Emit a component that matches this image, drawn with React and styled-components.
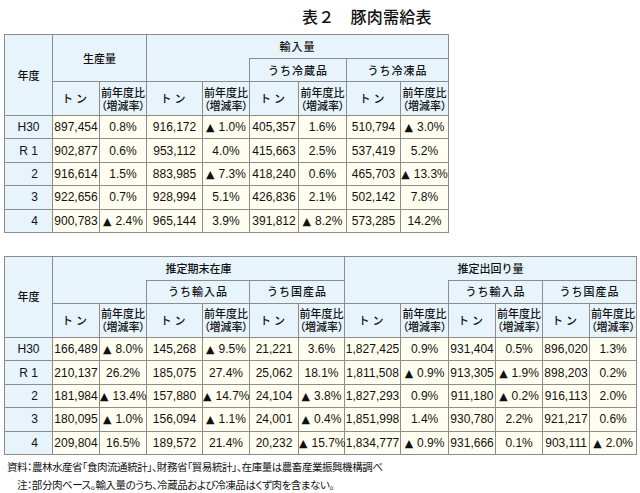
import React from "react";
import styled, { createGlobalStyle } from "styled-components";

const GlobalStyle = createGlobalStyle`
  html, body { margin: 0; padding: 0; background: #ffffff; }
  body { font-family: "Liberation Sans", "Noto Sans CJK JP", sans-serif; color: #111; }
`;

const HEAD_BG = "#e7f4fc";
const YEAR_BG = "#e7f4fc";
const CELL_BG = "#fffef0";
const LINE = "#8c8c8c";

const Page = styled.div`
  width: 640px;
  padding-left: 4px;
  box-sizing: border-box;
`;

const Title = styled.h1`
  margin: 0;
  height: 34px;
  padding-left: 298px;
  font-family: "Noto Sans CJK JP", sans-serif;
  font-size: 16px;
  font-weight: 500;
  line-height: 33px;
  letter-spacing: 0.2px;
  color: #111;
`;

const Table = styled.table`
  table-layout: fixed;
  border-collapse: collapse;
  width: ${(p) => p.$width}px;
  margin-bottom: ${(p) => p.$gap}px;
  border: 1px solid #808080;
`;

const HeadRow = styled.tr`
  height: ${(p) => p.$h}px;
`;

const DataRow = styled.tr`
  height: 23.4px;
`;

const HeadCell = styled.th`
  background: ${HEAD_BG};
  border: 1px solid ${LINE};
  ${(p) => (p.$open ? "border-top-style: hidden;" : "")}
  padding: 0;
  text-align: center;
  vertical-align: middle;
  font-family: "Noto Sans CJK JP", sans-serif;
  font-size: 11px;
  font-weight: 500;
  line-height: 13px;
  letter-spacing: ${(p) => p.$spread || 0}px;
  white-space: nowrap;
  color: #111;
`;

const Paren = styled.span`
  font-feature-settings: "palt";
`;

const YearCell = styled.th`
  background: ${YEAR_BG};
  border: 1px solid ${LINE};
  padding: 0 0 0 ${(p) => (p.$single ? 12 : 0)}px;
  text-align: center;
  font-family: "Liberation Sans", "Noto Sans CJK JP", sans-serif;
  font-size: 12px;
  font-weight: 400;
  color: #111;
`;

const NumCell = styled.td`
  background: ${CELL_BG};
  border: 1px solid ${LINE};
  padding: 0;
  text-align: center;
  white-space: nowrap;
  font-family: "Liberation Sans", "DejaVu Sans", sans-serif;
  font-size: 12px;
  color: #111;
`;

const Tri = styled.span`
  font-family: "DejaVu Sans", sans-serif;
  font-size: 11px;
  margin-right: 4px;
`;

const Notes = styled.div`
  padding-top: 3px;
  padding-left: 3px;
  font-family: "Noto Sans CJK JP", sans-serif;
  font-size: 10.5px;
  line-height: 18px;
  letter-spacing: -0.45px;
  font-feature-settings: "palt";
  color: #111;
`;

const NoteLine = styled.div`
  padding-left: ${(p) => p.$indent || 0}px;
  white-space: nowrap;
`;

const Ratio = () => (
  <>
    前年度比
    <br />
    <Paren>（増減率）</Paren>
  </>
);

const Value = ({ v }) =>
  v.startsWith("▲") ? (
    <>
      <Tri>▲</Tri>
      {v.slice(2)}
    </>
  ) : (
    v
  );

const years = ["H30", "R 1", "2", "3", "4"];

const supply = [
  ["897,454", "0.8%", "916,172", "▲ 1.0%", "405,357", "1.6%", "510,794", "▲ 3.0%"],
  ["902,877", "0.6%", "953,112", "4.0%", "415,663", "2.5%", "537,419", "5.2%"],
  ["916,614", "1.5%", "883,985", "▲ 7.3%", "418,240", "0.6%", "465,703", "▲ 13.3%"],
  ["922,656", "0.7%", "928,994", "5.1%", "426,836", "2.1%", "502,142", "7.8%"],
  ["900,783", "▲ 2.4%", "965,144", "3.9%", "391,812", "▲ 8.2%", "573,285", "14.2%"],
];

const stock = [
  ["166,489", "▲ 8.0%", "145,268", "▲ 9.5%", "21,221", "3.6%", "1,827,425", "0.9%", "931,404", "0.5%", "896,020", "1.3%"],
  ["210,137", "26.2%", "185,075", "27.4%", "25,062", "18.1%", "1,811,508", "▲ 0.9%", "913,305", "▲ 1.9%", "898,203", "0.2%"],
  ["181,984", "▲ 13.4%", "157,880", "▲ 14.7%", "24,104", "▲ 3.8%", "1,827,293", "0.9%", "911,180", "▲ 0.2%", "916,113", "2.0%"],
  ["180,095", "▲ 1.0%", "156,094", "▲ 1.1%", "24,001", "▲ 0.4%", "1,851,998", "1.4%", "930,780", "2.2%", "921,217", "0.6%"],
  ["209,804", "16.5%", "189,572", "21.4%", "20,232", "▲ 15.7%", "1,834,777", "▲ 0.9%", "931,666", "0.1%", "903,111", "▲ 2.0%"],
];

const topCols = [48, 47, 47, 56, 47, 49, 48, 54, 48];
const bottomCols = [48, 47, 47, 56, 47, 49, 46, 56, 48, 47, 47, 47, 47];

const Cols = ({ widths }) => (
  <colgroup>
    {widths.map((w, i) => (
      <col key={i} style={{ width: w }} />
    ))}
  </colgroup>
);

const Body = ({ rows }) => (
  <tbody>
    {rows.map((r, i) => (
      <DataRow key={i}>
        <YearCell scope="row" $single={years[i].length === 1}>
          {years[i]}
        </YearCell>
        {r.map((v, j) => (
          <NumCell key={j}>
            <Value v={v} />
          </NumCell>
        ))}
      </DataRow>
    ))}
  </tbody>
);

const UnitRow = ({ pairs }) => (
  <HeadRow $h={34}>
    {Array.from({ length: pairs }).flatMap((_, i) => [
      <HeadCell key={`t${i}`} $spread={3}>
        トン
      </HeadCell>,
      <HeadCell key={`r${i}`}>
        <Ratio />
      </HeadCell>,
    ])}
  </HeadRow>
);

export default function App() {
  return (
    <Page>
      <GlobalStyle />
      <Title>表２　豚肉需給表</Title>

      <Table $width={445} $gap={23}>
        <Cols widths={topCols} />
        <thead>
          <HeadRow $h={24}>
            <HeadCell rowSpan={3}>年度</HeadCell>
            <HeadCell colSpan={2} rowSpan={2}>
              生産量
            </HeadCell>
            <HeadCell colSpan={6} $spread={1}>
              輸入量
            </HeadCell>
          </HeadRow>
          <HeadRow $h={23}>
            <HeadCell colSpan={2} $open />
            <HeadCell colSpan={2} $spread={1}>
              うち冷蔵品
            </HeadCell>
            <HeadCell colSpan={2} $spread={1}>
              うち冷凍品
            </HeadCell>
          </HeadRow>
          <UnitRow pairs={4} />
        </thead>
        <Body rows={supply} />
      </Table>

      <Table $width={633} $gap={0}>
        <Cols widths={bottomCols} />
        <thead>
          <HeadRow $h={24}>
            <HeadCell rowSpan={3}>年度</HeadCell>
            <HeadCell colSpan={6}>推定期末在庫</HeadCell>
            <HeadCell colSpan={6}>推定出回り量</HeadCell>
          </HeadRow>
          <HeadRow $h={23}>
            <HeadCell colSpan={2} $open />
            <HeadCell colSpan={2} $spread={1}>
              うち輸入品
            </HeadCell>
            <HeadCell colSpan={2} $spread={1}>
              うち国産品
            </HeadCell>
            <HeadCell colSpan={2} $open />
            <HeadCell colSpan={2} $spread={1}>
              うち輸入品
            </HeadCell>
            <HeadCell colSpan={2} $spread={1}>
              うち国産品
            </HeadCell>
          </HeadRow>
          <UnitRow pairs={6} />
        </thead>
        <Body rows={stock} />
      </Table>

      <Notes>
        <NoteLine>資料：農林水産省「食肉流通統計」、財務省「貿易統計」、在庫量は農畜産業振興機構調べ</NoteLine>
        <NoteLine $indent={10}>注：部分肉ベース。輸入量のうち、冷蔵品および冷凍品はくず肉を含まない。</NoteLine>
      </Notes>
    </Page>
  );
}
